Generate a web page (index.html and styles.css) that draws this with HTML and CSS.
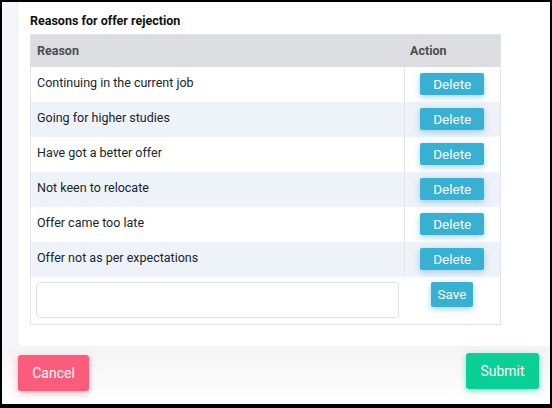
FILE: index.html
```html
<!DOCTYPE html>
<html>
<head>
<meta charset="utf-8">
<link rel="stylesheet" href="styles.css">
</head>
<body>
<div class="frame">
  <div class="page">
    <div class="card">
      <h4 class="title">Reasons for offer rejection</h4>
      <table class="reasons">
        <colgroup><col class="col-reason"><col class="col-action"></colgroup>
        <thead>
          <tr><th>Reason</th><th>Action</th></tr>
        </thead>
        <tbody>
          <tr><td>Continuing in the current job</td><td class="act"><button class="btn btn-info">Delete</button></td></tr>
          <tr class="alt"><td>Going for higher studies</td><td class="act"><button class="btn btn-info">Delete</button></td></tr>
          <tr><td>Have got a better offer</td><td class="act"><button class="btn btn-info">Delete</button></td></tr>
          <tr class="alt"><td>Not keen to relocate</td><td class="act"><button class="btn btn-info">Delete</button></td></tr>
          <tr><td>Offer came too late</td><td class="act"><button class="btn btn-info">Delete</button></td></tr>
          <tr class="alt"><td>Offer not as per expectations</td><td class="act"><button class="btn btn-info">Delete</button></td></tr>
          <tr class="new-row"><td class="input-cell"><input class="text-input" type="text"></td><td class="act save-cell"><button class="btn btn-info btn-save">Save</button></td></tr>
        </tbody>
      </table>
    </div>
  </div>
  <div class="footer">
    <button class="btn btn-lg btn-danger">Cancel</button>
    <button class="btn btn-lg btn-success">Submit</button>
  </div>
</div>
</body>
</html>
```
FILE: styles.css
```css
* { box-sizing: border-box; }
html, body { margin: 0; padding: 0; }
body {
  font-family: Roboto, "Liberation Sans", sans-serif;
  color: #212529;
  background: #fff;
}
.frame {
  width: 552px;
  height: 408px;
  border: 2px solid #000;
  border-bottom-width: 4px;
  display: flex;
  flex-direction: column;
  overflow: hidden;
}
.page {
  background: #f5f6f8;
  padding-left: 16px;
}
.card {
  background: #fff;
  border-bottom-left-radius: 4px;
  box-shadow: 0 0 2px rgba(0,0,0,0.12);
  padding: 11px 0 0 12px;
  height: 344px;
}
.title {
  margin: 0 0 6px 0;
  font-size: 12.5px;
  font-weight: 700;
  line-height: 15px;
  color: #111;
}
.reasons {
  width: 471px;
  border-collapse: collapse;
  border: 1px solid #e4e5e8;
  font-size: 12.5px;
}
.col-reason { width: 373px; }
.col-action { width: 98px; }
.reasons th {
  background: #dcdde1;
  height: 32px;
  text-align: left;
  font-weight: 700;
  color: #4a4d52;
  padding: 0 6px;
  font-size: 12.5px;
}
.reasons td {
  height: 35px;
  padding: 0 6px 3px 6px;
  color: #212529;
}
.reasons td.act {
  border-left: 1px solid #e4e5e8;
  text-align: center;
  padding: 0;
}
.reasons tr.alt td { background: #eef2f9; }
.reasons tr.new-row td { border-left: none; height: 47px; vertical-align: top; }
.input-cell { padding: 5px 5px 6px 5px !important; }
.text-input {
  display: block;
  width: 363px;
  height: 36px;
  border: 1px solid #dee2e6;
  border-radius: 4px;
  background: #fff;
}
.save-cell { padding-top: 5px !important; }
.btn {
  font-family: Roboto, "Liberation Sans", sans-serif;
  border: none;
  color: #fff;
  border-radius: 2px;
  cursor: pointer;
}
.btn-info {
  background: #39afd1;
  box-shadow: 0 2px 6px 0 rgba(57,175,209,0.5);
  width: 64px;
  height: 22px;
  font-size: 13.5px;
  line-height: 22px;
  padding: 0;
  vertical-align: middle;
}
.btn-save {
  width: 42px;
  height: 25px;
  line-height: 25px;
}
.footer {
  flex: 1;
  background: linear-gradient(#f4f4f4, #ffffff);
  display: flex;
  justify-content: space-between;
  align-items: flex-start;
  padding: 0 11px 0 16px;
}
.btn-lg {
  height: 36px;
  font-size: 14px;
  border-radius: 3px;
  padding: 0;
}
.btn-danger {
  background: #fa5c7c;
  box-shadow: 0 2px 6px 0 rgba(250,92,124,0.5);
  width: 71px;
  margin-top: 9px;
}
.btn-success {
  background: #0acf97;
  box-shadow: 0 2px 6px 0 rgba(10,207,151,0.5);
  width: 73px;
  margin-top: 7px;
}
```
